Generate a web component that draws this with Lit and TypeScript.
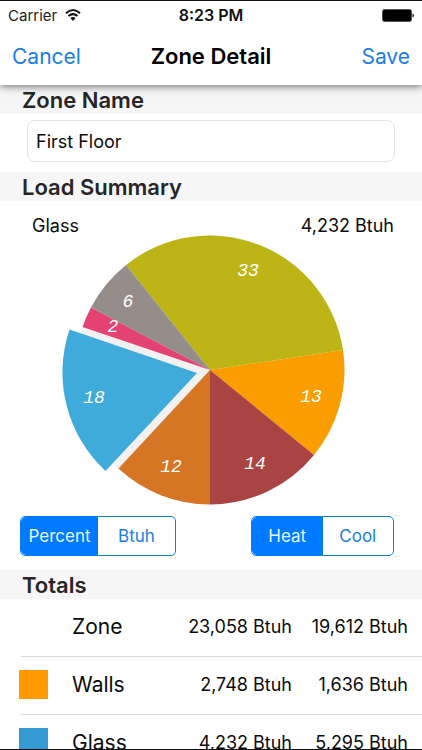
import { LitElement, html, css, svg } from "lit";
import { customElement, property, state } from "lit/decorators.js";

interface Slice {
  name: string;
  color: string;
  percent: number;
  path: string;
  x: number;
  y: number;
}

const SLICES: Slice[] = [
  { name: "Roof", color: "#bdb415", percent: 33, path: "M210 370L126 265A134.500 134.500 0 0 1 343 350Z", x: 248, y: 271 },
  { name: "Walls", color: "#f99d00", percent: 13, path: "M210 370L343 350A134.500 134.500 0 0 1 314 455Z", x: 311, y: 397 },
  { name: "Floor", color: "#aa4443", percent: 14, path: "M210 370L314 455A134.500 134.500 0 0 1 210 504.500Z", x: 255, y: 464 },
  { name: "Infiltration", color: "#d67625", percent: 12, path: "M210 370V504.500A134.500 134.500 0 0 1 118.500 468.500Z", x: 171, y: 467 },
  { name: "Glass", color: "#3fabdb", percent: 18, path: "M197 373L105.500 471A134.500 134.500 0 0 1 69.500 329.500Z", x: 94, y: 398 },
  { name: "Doors", color: "#e54274", percent: 2, path: "M210 370L82.500 327A134.500 134.500 0 0 1 91 307.500Z", x: 113, y: 327 },
  { name: "Ducts", color: "#958d8a", percent: 6, path: "M210 370L91 307.500A134.500 134.500 0 0 1 126 265Z", x: 128, y: 302 },
];

const TOTALS = [
  { name: "Zone", color: "", heat: "23,058 Btuh", cool: "19,612 Btuh" },
  { name: "Walls", color: "#ff9a00", heat: "2,748 Btuh", cool: "1,636 Btuh" },
  { name: "Glass", color: "#349cd2", heat: "4,232 Btuh", cool: "5,295 Btuh" },
];

@customElement("segmented-control")
class SegmentedControl extends LitElement {
  @property() label = "";
  @property({ attribute: false }) options: string[] = [];
  @state() selected = 0;

  static styles = css`
    :host { display: block; }
    .group {
      display: flex;
      height: 40px;
      box-sizing: border-box;
      margin: 0;
      padding: 0;
      border: 1px solid #0a7cf5;
      border-radius: 5px;
      overflow: hidden;
    }
    .option {
      flex: 1 1 0;
      display: grid;
      place-items: center;
      color: #1a7ee6;
      font-size: 17px;
      cursor: pointer;
    }
    .option:has(.radio:checked) { background: #007aff; color: #e6f6ff; }
    .radio { appearance: none; position: absolute; margin: 0; width: 0; height: 0; }
  `;

  render() {
    return html`<fieldset class="group" aria-label=${this.label}>
      ${this.options.map(
        (option, i) => html`<label class="option">
          <input class="radio" type="radio" name="choice" .checked=${i === this.selected}
            @change=${() => (this.selected = i)} />${option}</label>`
      )}
    </fieldset>`;
  }
}

@customElement("app-root")
class AppRoot extends LitElement {
  static styles = css`
    :host {
      display: flex;
      flex-direction: column;
      height: 100vh;
      box-sizing: border-box;
      overflow: hidden;
      border-top: 1px solid #101014;
      border-bottom: 1px solid #101014;
      background: #fff;
      color: #0b0b0b;
      font-family: Inter, "Liberation Sans", sans-serif;
      font-size: 18px;
    }
    .header {
      flex: none;
      position: relative;
      z-index: 1;
      background: #fff;
      box-shadow: 0 1px 8px rgba(0, 0, 0, 0.6);
    }
    .status, .nav {
      display: grid;
      grid-template-columns: 1fr auto 1fr;
      align-items: center;
    }
    .status { height: 28px; padding: 0 8px; color: #222; }
    .carrier { display: flex; align-items: center; gap: 8px; font-size: 15px; }
    .time { font-size: 16px; font-weight: 600; color: #111; }
    .battery { justify-self: end; }
    .nav { height: 54px; padding: 0 12px 2px; }
    .title { margin: 0; font-size: 22px; font-weight: 600; color: #000; }
    .action {
      border: 0;
      padding: 0;
      background: none;
      color: #1a7ee6;
      font: inherit;
      font-size: 21px;
      justify-self: start;
    }
    .save { justify-self: end; }
    .body { flex: 1; min-height: 0; overflow-y: auto; scrollbar-width: none; }
    .band {
      margin: 0;
      padding: 0 22px;
      height: 29px;
      line-height: 31px;
      background: #f6f6f6;
      color: #262626;
      font-size: 22px;
      font-weight: 600;
    }
    .field { padding: 6px 27px 10px; }
    .name {
      display: block;
      width: 100%;
      height: 42px;
      box-sizing: border-box;
      padding: 0 8px;
      border: 1px solid #e4e4e4;
      border-radius: 8px;
      color: inherit;
      font: inherit;
    }
    .current {
      display: flex;
      justify-content: space-between;
      padding: 16px 28px 0 32px;
      line-height: 18px;
    }
    .pie { display: block; width: 300px; height: 270px; margin: 0 auto; }
    .percent {
      fill: #fff;
      font: italic 18px "Liberation Mono", monospace;
      text-anchor: middle;
      dominant-baseline: central;
    }
    .toggles {
      display: flex;
      justify-content: space-between;
      padding: 11px 28px 14px 20px;
    }
    .units { width: 156px; }
    .mode { width: 143px; }
    .totals { width: 100%; border-spacing: 0; table-layout: fixed; padding-left: 21px; }
    .cell {
      height: 54px;
      padding: 0 0 3px;
      border-bottom: 1px solid #dcdce0;
      text-align: right;
      font-weight: 400;
    }
    .key { width: 51px; }
    .label { width: 84px; text-align: left; font-size: 21px; }
    .cool { width: 116px; padding-right: 14px; }
    .swatch { display: block; width: 29px; height: 29px; margin-left: -2px; }
  `;

  render() {
    return html`
      <header class="header">
        <div class="status">
          <span class="carrier">Carrier
            <svg width="16" height="12" viewBox="0 0 16 12" aria-label="Wi-Fi">
              <g fill="none" stroke="#111" stroke-width="2">
                <path d="M1 4.300Q8-2.200 15 4.300" />
                <path d="M3.500 7.100Q8 3.100 12.500 7.100" />
              </g>
              <path d="M5.300 9.100Q8 6.800 10.700 9.100L8 12Z" fill="#111" />
            </svg>
          </span>
          <span class="time">8:23 PM</span>
          <svg class="battery" width="32" height="13" viewBox="0 0 32 13" aria-label="Battery full">
            <rect x=".5" y=".5" width="29" height="12" rx="2" fill="#000" stroke="#555" />
            <path d="M30.500 4.500q1.500.5 1.500 2t-1.500 2z" fill="#111" />
          </svg>
        </div>
        <nav class="nav">
          <button class="action">Cancel</button>
          <h1 class="title">Zone Detail</h1>
          <button class="action save">Save</button>
        </nav>
      </header>
      <main class="body">
        <h2 class="band"><label for="zone-name">Zone Name</label></h2>
        <div class="field"><input class="name" id="zone-name" type="text" value="First Floor" /></div>
        <h2 class="band">Load Summary</h2>
        <div class="current"><span>Glass</span><span>4,232 Btuh</span></div>
        <svg class="pie" viewBox="61 235 300 270" role="img" aria-label="Load by component">
          <circle cx="210" cy="370" r="134.500" fill="#f1f1f1" />
          ${SLICES.map((s) => svg`<path d=${s.path} fill=${s.color} />`)}
          ${SLICES.map((s) => svg`<text class="percent" x=${s.x} y=${s.y}>${s.percent}</text>`)}
        </svg>
        <div class="toggles">
          <segmented-control class="units" label="Units" .options=${["Percent", "Btuh"]}></segmented-control>
          <segmented-control class="mode" label="Mode" .options=${["Heat", "Cool"]}></segmented-control>
        </div>
        <h2 class="band">Totals</h2>
        <table class="totals">
          <tbody>
            ${TOTALS.map(
              (t) => html`<tr>
                <td class="cell key">${t.color ? html`<span class="swatch" style="background:${t.color}"></span>` : ""}</td>
                <th class="cell label" scope="row">${t.name}</th>
                <td class="cell">${t.heat}</td>
                <td class="cell cool">${t.cool}</td>
              </tr>`
            )}
          </tbody>
        </table>
      </main>
    `;
  }
}
